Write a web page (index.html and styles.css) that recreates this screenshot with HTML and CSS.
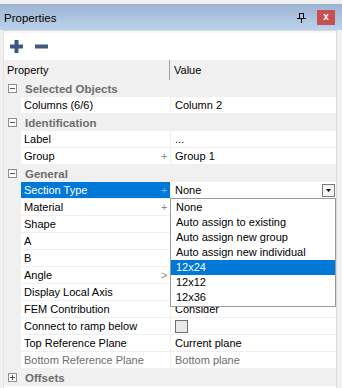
FILE: index.html
```html
<!DOCTYPE html>
<html lang="en">
<head>
    <meta charset="UTF-8">
    <meta name="viewport" content="width=device-width, initial-scale=1.0">
    <title>Properties</title>
    <link rel="stylesheet" href="styles.css">
</head>
<body>
    <div class="window">
        <!-- Title bar -->
        <div class="titlebar">
            <span class="title">Properties</span>
            <svg class="pin" width="9" height="10" viewBox="0 0 9 10">
                <rect x="2.5" y="0.5" width="4" height="5" fill="none" stroke="#000"/>
                <line x1="0" y1="5.5" x2="9" y2="5.5" stroke="#000"/>
                <line x1="4.5" y1="6" x2="4.5" y2="10" stroke="#000"/>
            </svg>
            <div class="close">x</div>
        </div>

        <div class="panel">
            <!-- Toolbar -->
            <div class="toolbar">
                <svg width="13" height="13" viewBox="0 0 13 13">
                    <rect x="4.5" y="0" width="4" height="13" fill="#3d5a7c"/>
                    <rect x="0" y="4.5" width="13" height="4" fill="#3d5a7c"/>
                </svg>
                <svg width="13" height="13" viewBox="0 0 13 13">
                    <rect x="0" y="4.5" width="13" height="4" fill="#3d5a7c"/>
                </svg>
            </div>

            <!-- Property grid -->
            <div class="grid">
                <div class="head">
                    <span class="head-name">Property</span>
                    <span class="head-value">Value</span>
                </div>

                <div class="cat">
                    <span class="toggle"><svg width="9" height="9" viewBox="0 0 9 9"><rect x="0.5" y="0.5" width="8" height="8" fill="#fff" stroke="#8f8f8f"/><line x1="2" y1="4.5" x2="7" y2="4.5" stroke="#555"/></svg></span>
                    <span class="cat-label">Selected Objects</span>
                </div>
                <div class="row">
                    <span class="gutter"></span>
                    <span class="name">Columns (6/6)</span>
                    <span class="value">Column 2</span>
                </div>

                <div class="cat">
                    <span class="toggle"><svg width="9" height="9" viewBox="0 0 9 9"><rect x="0.5" y="0.5" width="8" height="8" fill="#fff" stroke="#8f8f8f"/><line x1="2" y1="4.5" x2="7" y2="4.5" stroke="#555"/></svg></span>
                    <span class="cat-label">Identification</span>
                </div>
                <div class="row">
                    <span class="gutter"></span>
                    <span class="name">Label</span>
                    <span class="value">...</span>
                </div>
                <div class="row">
                    <span class="gutter"></span>
                    <span class="name">Group <em class="mark">+</em></span>
                    <span class="value">Group 1</span>
                </div>

                <div class="cat">
                    <span class="toggle"><svg width="9" height="9" viewBox="0 0 9 9"><rect x="0.5" y="0.5" width="8" height="8" fill="#fff" stroke="#8f8f8f"/><line x1="2" y1="4.5" x2="7" y2="4.5" stroke="#555"/></svg></span>
                    <span class="cat-label">General</span>
                </div>
                <div class="row selected">
                    <span class="gutter"></span>
                    <span class="name">Section Type <em class="mark">+</em></span>
                    <span class="value">None
                        <span class="drop-btn"><svg width="5" height="3" viewBox="0 0 5 3"><path d="M0 0h5L2.5 3z" fill="#000"/></svg></span>
                    </span>
                </div>
                <div class="row">
                    <span class="gutter"></span>
                    <span class="name">Material <em class="mark">+</em></span>
                    <span class="value"></span>
                </div>
                <div class="row">
                    <span class="gutter"></span>
                    <span class="name">Shape</span>
                    <span class="value"></span>
                </div>
                <div class="row">
                    <span class="gutter"></span>
                    <span class="name">A</span>
                    <span class="value"></span>
                </div>
                <div class="row">
                    <span class="gutter"></span>
                    <span class="name">B</span>
                    <span class="value"></span>
                </div>
                <div class="row">
                    <span class="gutter"></span>
                    <span class="name">Angle <em class="mark">&gt;</em></span>
                    <span class="value"></span>
                </div>
                <div class="row">
                    <span class="gutter"></span>
                    <span class="name">Display Local Axis</span>
                    <span class="value"></span>
                </div>
                <div class="row">
                    <span class="gutter"></span>
                    <span class="name">FEM Contribution</span>
                    <span class="value">Consider</span>
                </div>
                <div class="row">
                    <span class="gutter"></span>
                    <span class="name">Connect to ramp below</span>
                    <span class="value"><span class="check"></span></span>
                </div>
                <div class="row">
                    <span class="gutter"></span>
                    <span class="name">Top Reference Plane</span>
                    <span class="value">Current plane</span>
                </div>
                <div class="row disabled">
                    <span class="gutter"></span>
                    <span class="name">Bottom Reference Plane</span>
                    <span class="value">Bottom plane</span>
                </div>

                <div class="cat">
                    <span class="toggle"><svg width="9" height="9" viewBox="0 0 9 9"><rect x="0.5" y="0.5" width="8" height="8" fill="#fff" stroke="#8f8f8f"/><line x1="2" y1="4.5" x2="7" y2="4.5" stroke="#555"/><line x1="4.5" y1="2" x2="4.5" y2="7" stroke="#555"/></svg></span>
                    <span class="cat-label">Offsets</span>
                </div>
            </div>

            <!-- Open list of the Section Type editor -->
            <ul class="dropdown">
                <li>None</li>
                <li>Auto assign to existing</li>
                <li>Auto assign new group</li>
                <li>Auto assign new individual</li>
                <li class="active">12x24</li>
                <li>12x12</li>
                <li>12x36</li>
            </ul>
        </div>
    </div>
</body>
</html>
```

FILE: styles.css
```css
body {
    margin: 0;
    padding: 0;
    background: #f0f0f0;
    font-family: "Liberation Sans", Arial, sans-serif;
    font-size: 11px;
    color: #000;
}
.window {
    width: 342px;
    height: 388px;
    padding-top: 4px;
    box-sizing: border-box;
    overflow: hidden;
}
.titlebar {
    height: 26px;
    display: flex;
    align-items: center;
    padding: 0 7px 0 4px;
    background: linear-gradient(#9cb4d2, #bcd3ec);
}
.title {
    flex: 1;
    font-size: 11.5px;
    padding-top: 1px;
}
.pin {
    margin-right: 11px;
    margin-top: 1px;
}
.close {
    width: 18px;
    height: 15px;
    margin-top: 1px;
    background: #c75050;
    color: #fff;
    font-weight: bold;
    font-size: 10px;
    line-height: 14px;
    text-align: center;
}
.panel {
    position: relative;
    margin: 0 5px 0 3px;
    border-top: 1px solid #d9d9d9;
    border-left: 1px solid #e3e3e3;
    border-right: 1px solid #d9d9d9;
    height: 360px;
    background: #fff;
}
.toolbar {
    height: 29px;
    display: flex;
    align-items: center;
    gap: 12px;
    padding-left: 6px;
    border-top: 2px solid #f7f7f7;
    box-sizing: border-box;
}
.grid {
    background: #f0f0f0;
}
.head {
    height: 20px;
    display: grid;
    grid-template-columns: 166px 1fr;
    align-items: center;
    background: #f0f0f0;
}
.head-name {
    padding-left: 3px;
    height: 20px;
    line-height: 20px;
    border-right: 1px solid #a0a0a0;
}
.head-value {
    padding-left: 4px;
}
.cat {
    height: 17px;
    display: flex;
    align-items: center;
    background: #f0f0f0;
}
.toggle {
    width: 16px;
    height: 17px;
    display: flex;
    align-items: center;
    justify-content: center;
}
.cat-label {
    padding-left: 5px;
    font-weight: bold;
    font-size: 11.5px;
    color: #6d6d6d;
}
.row {
    height: 17px;
    display: grid;
    grid-template-columns: 16px 149px 1fr;
    column-gap: 1px;
}
.gutter {
    background: #f0f0f0;
}
.name,
.value {
    background: #fff;
    height: 16px;
    line-height: 16px;
    padding-left: 3px;
    position: relative;
    white-space: nowrap;
}
.value {
    padding-left: 4px;
}
.mark {
    position: absolute;
    left: 140px;
    top: 0;
    font-style: normal;
    color: #8a8a8a;
}
.selected .name {
    background: #0078d7;
    color: #fff;
}
.selected .mark {
    color: #7fb3e6;
}
.selected .value {
    height: 17px;
}
.disabled .name,
.disabled .value {
    color: #6d6d6d;
}
.drop-btn {
    position: absolute;
    right: 1px;
    top: 2px;
    width: 13px;
    height: 13px;
    border: 1px solid #7a7a7a;
    box-sizing: border-box;
    display: flex;
    align-items: center;
    justify-content: center;
    background: #f4f4f4;
}
.check {
    display: inline-block;
    width: 11px;
    height: 11px;
    border: 1px solid #707070;
    background: #e9e9e9;
    vertical-align: -3px;
}
.dropdown {
    position: absolute;
    left: 166px;
    top: 167px;
    width: 166px;
    margin: 0;
    padding: 1px 0;
    list-style: none;
    background: #fff;
    border: 1px solid #9a9a9a;
    box-sizing: border-box;
}
.dropdown li {
    height: 15px;
    line-height: 15px;
    padding-left: 5px;
}
.dropdown .active {
    background: #0078d7;
    color: #fff;
}
```
